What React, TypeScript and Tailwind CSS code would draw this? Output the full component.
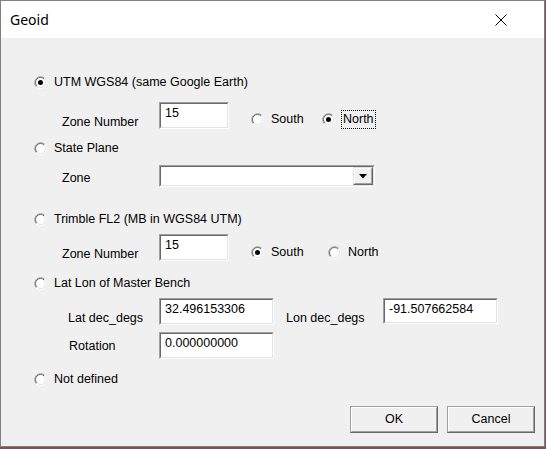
import React from 'react';

function RadioDot({ checked }: { checked?: boolean }) {
  return (
    <svg width="13" height="13" viewBox="0 0 13 13" className="shrink-0">
      <circle cx="6.5" cy="6.5" r="5" fill="#fff" />
      <path d="M2.26 10.74 A6 6 0 0 1 10.74 2.26" fill="none" stroke="#a0a0a0" />
      <path d="M10.74 2.26 A6 6 0 0 1 2.26 10.74" fill="none" stroke="#fff" />
      <path d="M2.96 10.04 A5 5 0 0 1 10.04 2.96" fill="none" stroke="#696969" />
      <path d="M10.04 2.96 A5 5 0 0 1 2.96 10.04" fill="none" stroke="#e3e3e3" />
      {checked && <circle cx="6.5" cy="6.5" r="2.5" fill="#000" />}
    </svg>
  );
}

function Radio({ label, checked, focused, className }: { label: string; checked?: boolean; focused?: boolean; className?: string }) {
  return (
    <div className={`flex items-center gap-[7px] ${className ?? ''}`}>
      <RadioDot checked={checked} />
      <span className={focused ? 'border border-dotted border-black px-px leading-[17px] -ml-px' : 'leading-[15px]'}>{label}</span>
    </div>
  );
}

function Field({ value, className }: { value?: string; className: string }) {
  return (
    <div className={`shrink-0 border border-t-[#a0a0a0] border-l-[#a0a0a0] border-b-white border-r-white ${className}`}>
      <div className="h-full border border-t-[#696969] border-l-[#696969] border-b-[#e3e3e3] border-r-[#e3e3e3] bg-white pl-1 pt-0.5 leading-[15px]">
        {value}
      </div>
    </div>
  );
}

function Combo() {
  return (
    <div className="w-[216px] h-[22px] shrink-0 border border-t-[#a0a0a0] border-l-[#a0a0a0] border-b-white border-r-white">
      <div className="h-full flex justify-end border border-t-[#696969] border-l-[#696969] border-b-[#e3e3e3] border-r-[#e3e3e3] bg-white">
        <div className="w-[20px] h-full border border-t-[#e3e3e3] border-l-[#e3e3e3] border-b-[#696969] border-r-[#696969]">
          <div className="h-full flex items-center justify-center bg-[#f0f0f0] border border-t-white border-l-white border-b-[#a0a0a0] border-r-[#a0a0a0]">
            <svg width="8" height="5" viewBox="0 0 8 5" className="mt-px">
              <path d="M0 0 H8 L4 4.5 Z" fill="#000" />
            </svg>
          </div>
        </div>
      </div>
    </div>
  );
}

function Button({ label }: { label: string }) {
  return (
    <div className="w-[88px] h-[27px] border border-t-[#a0a0a0] border-l-[#a0a0a0] border-b-[#696969] border-r-[#696969]">
      <div className="h-full flex items-center justify-center bg-[#f0f0f0] border border-t-white border-l-white border-b-[#a0a0a0] border-r-[#a0a0a0]">
        {label}
      </div>
    </div>
  );
}

export default function App() {
  return (
    <div className="w-[546px] h-[449px] bg-[#7d5555]">
      <div className="w-[545px] h-[447px] border border-[#808080] flex flex-col bg-[#f0f0f0] font-['Liberation_Sans',Arial,sans-serif] text-[12.5px] text-black">
        <div className="h-[37px] shrink-0 bg-white flex items-center justify-between">
          <span className="pl-[9px] text-[14px] font-['Noto_Sans',sans-serif] leading-[20px]">Geoid</span>
          <svg width="12" height="12" viewBox="0 0 12 12" className="mr-[37px]">
            <path d="M0.5 0.5 L11.5 11.5 M11.5 0.5 L0.5 11.5" stroke="#000" strokeWidth="1" />
          </svg>
        </div>

        <div className="flex flex-col">
          <Radio label="UTM WGS84 (same Google Earth)" checked className="ml-[33px] mt-[37px] h-[15px]" />

          <div className="flex h-[27px] mt-[12px] ml-[61px]">
            <span className="w-[97px] mt-[13px] leading-[15px]">Zone Number</span>
            <Field value="15" className="w-[70px] h-[27px]" />
            <Radio label="South" className="ml-[22px] w-[71px] h-[19px] mt-[8px]" />
            <Radio label="North" checked focused className="h-[19px] mt-[8px]" />
          </div>

          <Radio label="State Plane" className="ml-[33px] mt-[12px] h-[15px]" />

          <div className="flex h-[22px] mt-[9px] ml-[61px]">
            <span className="w-[97px] mt-[6px] leading-[15px]">Zone</span>
            <Combo />
          </div>

          <Radio label="Trimble FL2 (MB in WGS84 UTM)" className="ml-[33px] mt-[25px] h-[15px]" />

          <div className="flex h-[27px] mt-[7px] ml-[61px]">
            <span className="w-[97px] mt-[13px] leading-[15px]">Zone Number</span>
            <Field value="15" className="w-[70px] h-[27px]" />
            <Radio label="South" checked className="ml-[22px] w-[77px] h-[19px] mt-[9px]" />
            <Radio label="North" className="h-[19px] mt-[9px]" />
          </div>

          <Radio label="Lat Lon of Master Bench" className="ml-[33px] mt-[15px] h-[15px]" />

          <div className="flex h-[27px] mt-[7px] ml-[67px]">
            <span className="w-[91px] mt-[13px] leading-[15px]">Lat dec_degs</span>
            <Field value="32.496153306" className="w-[115px] h-[27px]" />
            <span className="w-[97px] ml-[12px] mt-[13px] leading-[15px]">Lon dec_degs</span>
            <Field value="-91.507662584" className="w-[115px] h-[26px]" />
          </div>

          <div className="flex h-[27px] mt-[7px] ml-[68px]">
            <span className="w-[90px] mt-[7px] leading-[15px]">Rotation</span>
            <Field value="0.000000000" className="w-[115px] h-[27px]" />
          </div>

          <Radio label="Not defined" className="ml-[33px] mt-[13px] h-[15px]" />

          <div className="flex justify-end gap-[9px] mt-[19px] mr-[9px]">
            <Button label="OK" />
            <Button label="Cancel" />
          </div>
        </div>
      </div>
    </div>
  );
}
